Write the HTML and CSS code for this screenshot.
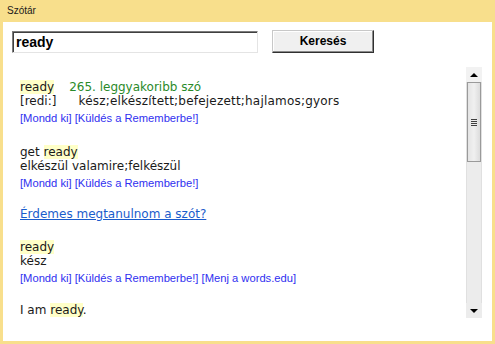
FILE: index.html
```html
<!DOCTYPE html>
<html>
<head>
<meta charset="utf-8">
<link rel="stylesheet" href="styles.css">
</head>
<body>
<div class="window">
  <div class="titlebar">Szótár</div>
  <div class="panel">
    <div class="search">
      <div class="input">ready</div>
      <div class="button">Keresés</div>
    </div>
    <div class="results">
      <div class="content">
        <div class="entry">
          <div class="line"><span class="hl">ready</span><span class="rank">265. leggyakoribb szó</span></div>
          <div class="line">[redi:]<span class="trans">kész;elkészített;befejezett;hajlamos;gyors</span></div>
          <div class="links">[Mondd ki] [Küldés a Rememberbe!]</div>
        </div>
        <div class="entry">
          <div class="line">get <span class="hl">ready</span></div>
          <div class="line">elkészül valamire;felkészül</div>
          <div class="links">[Mondd ki] [Küldés a Rememberbe!]</div>
        </div>
        <div class="entry learn"><span class="learnlink">Érdemes megtanulnom a szót?</span></div>
        <div class="entry">
          <div class="line"><span class="hl">ready</span></div>
          <div class="line">kész</div>
          <div class="links">[Mondd ki] [Küldés a Rememberbe!] [Menj a words.edu]</div>
        </div>
        <div class="entry sentence">
          <div class="line">I am <span class="hl">ready</span>.</div>
        </div>
      </div>
      <div class="scrollbar">
        <div class="sb-btn"><span class="arrow-up"></span></div>
        <div class="sb-track">
          <div class="thumb"><span class="grip"></span></div>
        </div>
        <div class="sb-btn down"><span class="arrow-down"></span></div>
      </div>
    </div>
  </div>
</div>
</body>
</html>
```
FILE: styles.css
```css
html, body {
  margin: 0;
  padding: 0;
}
body {
  width: 495px;
  height: 344px;
  background: #f8df8c;
  overflow: hidden;
}
.window {
  display: flex;
  flex-direction: column;
  height: 344px;
}
.titlebar {
  height: 22px;
  line-height: 22px;
  padding-left: 7px;
  font-family: "Liberation Sans", Arial, sans-serif;
  font-size: 10px;
  color: #1a1a1a;
}
.panel {
  background: #fff;
  margin: 0 3px 3px 3px;
  flex: 1;
  display: flex;
  flex-direction: column;
  padding: 8px 10px 0 9px;
}
.search {
  display: flex;
  align-items: flex-end;
  gap: 14px;
}
.input {
  width: 241px;
  height: 20px;
  margin-top: 1px;
  border: 1px solid;
  border-color: #7c7c7c #e4e4e4 #e4e4e4 #7c7c7c;
  box-shadow: inset 1px 1px 0 #404040;
  font-family: "Liberation Sans", Arial, sans-serif;
  font-weight: bold;
  font-size: 14px;
  line-height: 21px;
  padding-left: 3px;
  color: #000;
}
.button {
  width: 100px;
  height: 21px;
  border: 1px solid;
  border-color: #c8c8c8 #303030 #303030 #c8c8c8;
  box-shadow: inset -1px -1px 0 #8a8a8a, inset 1px 1px 0 #fff;
  background: #f0f0f0;
  font-family: "Liberation Sans", Arial, sans-serif;
  font-weight: bold;
  font-size: 12px;
  line-height: 21px;
  text-align: center;
  color: #000;
}
.results {
  margin-top: 14px;
  height: 251px;
  display: flex;
}
.content {
  flex: 1;
  padding: 13px 0 0 8px;
  font-family: "DejaVu Sans", Verdana, sans-serif;
  font-size: 12px;
  color: #1a1a1a;
  overflow: hidden;
}
.line {
  line-height: 14px;
  white-space: nowrap;
}
.hl {
  background: #ffffc8;
}
.rank {
  color: #2a8a2a;
  margin-left: 15px;
}
.trans {
  margin-left: 22px;
  letter-spacing: 0.2px;
}
.links {
  margin-top: 3px;
  line-height: 14px;
  font-family: "Liberation Sans", Arial, sans-serif;
  font-size: 11.2px;
  color: #3030f0;
  white-space: nowrap;
}
.entry + .entry {
  margin-top: 20px;
}
.entry.learn {
  margin-top: 17px;
  line-height: 14px;
}
.entry.learn + .entry {
  margin-top: 19px;
}
.entry.sentence {
  margin-top: 18px;
}
.learnlink {
  color: #1a5ccc;
  text-decoration: underline;
}
.scrollbar {
  width: 16px;
  display: flex;
  flex-direction: column;
  background: #ececec;
}
.sb-btn {
  height: 15px;
  display: flex;
  align-items: center;
  justify-content: center;
  background: #f2f2f2;
}
.sb-btn.down {
  background: #ececec;
}
.arrow-up {
  width: 0;
  height: 0;
  border-left: 4px solid transparent;
  border-right: 4px solid transparent;
  border-bottom: 4px solid #000;
}
.arrow-down {
  width: 0;
  height: 0;
  border-left: 4px solid transparent;
  border-right: 4px solid transparent;
  border-top: 4px solid #000;
}
.sb-track {
  flex: 1;
  border-left: 1px solid #e0e0e0;
  border-right: 1px solid #e0e0e0;
}
.thumb {
  height: 78px;
  border: 1px solid #9a9a9a;
  background: linear-gradient(to right, #e4e4e4, #f0f0f0 50%, #dcdcdc);
  display: flex;
  align-items: center;
  justify-content: center;
}
.grip {
  width: 6px;
  height: 7px;
  background: repeating-linear-gradient(to bottom, #404040 0, #404040 1px, transparent 1px, transparent 2px);
}
```
